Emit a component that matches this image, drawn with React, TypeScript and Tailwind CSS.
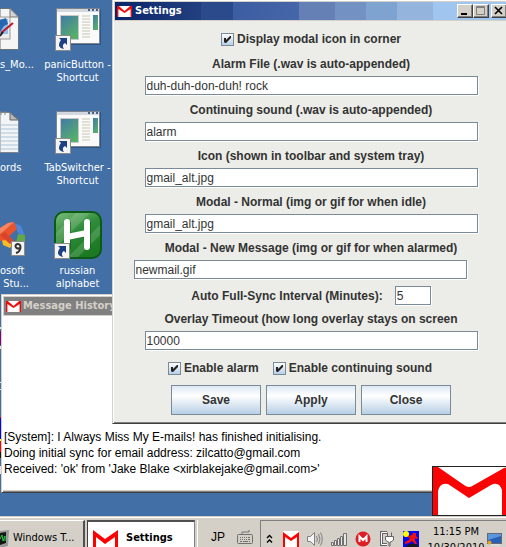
import React from "react";

const tahoma = "font-['DejaVu_Sans_Condensed','DejaVu_Sans',sans-serif]";
const arial = "font-['Liberation_Sans',sans-serif]";

function GmailIcon({ className }: { className: string }) {
  return (
    <svg viewBox="0 0 16 11" preserveAspectRatio="none" className={className} aria-hidden="true">
      <rect width="16" height="11" fill="#fff" />
      <path d="M0 0H2L8 5L14 0H16V11H14.5V3L8 7L1.5 3V11H0Z" fill="#f00a0a" />
    </svg>
  );
}

function ShortcutArrow() {
  return (
    <svg viewBox="0 0 16 16" className="absolute bottom-0 left-0 size-4" aria-hidden="true">
      <rect x=".5" y=".5" width="15" height="15" fill="#f4f4f4" stroke="#8b8b8b" />
      <path d="M4 3H12V10L10 8C8 9 7 11 9 14C3 13 3 9 6 5Z" fill="#1d3f83" />
    </svg>
  );
}

function AppShortcutIcon() {
  return (
    <div className="relative h-[43px] w-[46px]">
      <svg viewBox="0 0 46 43" className="h-[43px] w-[46px]" aria-hidden="true">
        <defs>
          <linearGradient id="pane" x2=".6" y2="1">
            <stop stopColor="#4478a8" />
            <stop offset="1" stopColor="#55b06a" />
          </linearGradient>
        </defs>
        <rect x="2" y="1" width="44" height="36" fill="#2d5586" />
        <rect x="1.5" y=".5" width="43" height="35" fill="#fafafa" stroke="#7c858c" />
        <rect x="2" y="1" width="42" height="3" fill="#d3d8df" />
        <path d="M33 2h2M37 2h2M41 2h2" stroke="#44618f" strokeWidth="2" />
        <rect x="5.500" y="7.500" width="18" height="24" fill="url(#pane)" stroke="#c8c8c8" />
        <path d="M27 8h8M27 11h8M27 14h8M27 17h8M27 20h8M27 23h8M27 26h8M27 29h8" stroke="#d8d8c8" strokeWidth="1.500" />
        <rect x="38" y="7" width="5" height="15" fill="url(#pane)" />
      </svg>
      <ShortcutArrow />
    </div>
  );
}

function AlphabetIcon() {
  return (
    <div className="relative size-12">
      <svg viewBox="0 0 48 48" className="size-12" aria-hidden="true">
        <defs>
          <linearGradient id="leaf" x2=".5" y2="1">
            <stop stopColor="#7cbf7c" />
            <stop offset=".5" stopColor="#2f8c3a" />
            <stop offset="1" stopColor="#1c7a24" />
          </linearGradient>
        </defs>
        <rect x="1" y="1" width="46" height="46" rx="9" fill="url(#leaf)" stroke="#0c5a14" strokeWidth="2" />
        <path d="M2 22L22 2H36L2 36ZM14 46L46 14V24L24 46Z" fill="#fff" opacity=".15" />
        <path d="M14 12V36M34 12V36M14 26L34 23" stroke="#0d4d14" strokeWidth="6" strokeLinecap="round" opacity=".5" />
        <path d="M13 11V36M33 11V36M13 26L33 22" stroke="#fff" strokeWidth="6" strokeLinecap="round" />
      </svg>
      <ShortcutArrow />
    </div>
  );
}

function ImageFileIcon() {
  return (
    <svg viewBox="0 0 20 43" className="h-[43px] w-5" aria-hidden="true">
      <path d="M0 .5H10L18.500 9V41.500H0Z" fill="#f5f5f5" stroke="#68727c" />
      <path d="M10 .5V9H18.500Z" fill="#d5d5d5" stroke="#777" />
      <rect x="-1" y="9" width="11" height="22" fill="#eee" stroke="#999" />
      <rect y="11" width="8" height="15" fill="#8fc1ea" />
      <path d="M0 12L6 10L8 16L4 18L0 24Z" fill="#2666b0" />
      <path d="M1 25L13 15" stroke="#c01828" strokeWidth="2" />
      <path d="M0 28L3 24" stroke="#222" strokeWidth="2" />
    </svg>
  );
}

function NotesIcon() {
  return (
    <svg viewBox="0 0 20 43" className="h-[43px] w-5" aria-hidden="true">
      <path d="M0 1.500H10L18.500 9V41.500H0Z" fill="#f2f4f6" stroke="#7c858c" />
      <path d="M10 1.500V9H18.500Z" fill="#b8b8b8" stroke="#666" />
      <path d="M0 14H18M0 18H18M0 22H18M0 26H18M0 30H18M0 34H18M0 38H18" stroke="#a9c5d8" />
      <path d="M1 0v4M5 0v4" stroke="#888" />
    </svg>
  );
}

function StudioIcon() {
  return (
    <svg viewBox="0 0 26 43" className="h-[43px] w-[26px]" aria-hidden="true">
      <path d="M14 9L21 12L25 22L18 19Z" fill="#4c86d8" />
      <path d="M18 20L25 21V31L16 29Z" fill="#62a845" />
      <path d="M2 26L8 23L14 28L10 34L3 31Z" fill="#f8bd24" />
      <path d="M0 14L8 9L14 8L17 15L5 26L0 27Z" fill="#e8532c" />
      <path d="M0 14L8 9L14 8L5 16L0 20Z" fill="#f58563" />
      <path d="M5 18L14 27L10 30L0 21Z" fill="#d9442a" />
      <rect x="11.500" y="27.500" width="13" height="14" fill="#f4f4f4" stroke="#8b8b8b" />
      <path d="M20 34C15 36 14 30 18 30S21 38 16 39" fill="none" stroke="#333" strokeWidth="2" />
    </svg>
  );
}

function DesktopIcon({ icon, lines, edge }: { icon: React.ReactNode; lines: string[]; edge?: boolean }) {
  return (
    <div className={`flex h-[103px] flex-col ${edge ? "items-start" : "items-center"}`}>
      <div className="flex h-12 items-center">{icon}</div>
      <div className={`whitespace-pre pt-[5px] text-[11px] leading-[13px] text-white ${edge ? "text-left" : "text-center"}`}>
        {lines.map((l) => (
          <div key={l}>{l}</div>
        ))}
      </div>
    </div>
  );
}

function Check({ id, label }: { id: string; label: string }) {
  return (
    <div className="flex items-center gap-[3px]">
      <div className="relative size-[13px]">
        <input
          id={id}
          type="checkbox"
          defaultChecked
          className="peer block size-[13px] appearance-none border border-[#7a8a99] bg-linear-to-b from-white to-[#b8cfe5]"
        />
        <svg viewBox="0 0 13 13" className="pointer-events-none absolute inset-0 hidden size-[13px] peer-checked:block" aria-hidden="true">
          <path d="M3 5H5V7L9 3H10V5L5 10H4L3 9Z" fill="#222" />
        </svg>
      </div>
      <label htmlFor={id} className="leading-4">{label}</label>
    </div>
  );
}

const inputStyle =
  "block h-[19px] rounded-none border border-[#7a8a99] bg-white px-px pt-px text-[12px] leading-4 font-normal text-[#333] shadow-[1px_1px_0_#fff] outline-none";

function Field({ id, label, value, shifted }: { id: string; label: string; value: string; shifted?: boolean }) {
  return (
    <div className="flex h-[46px] flex-col items-center">
      <label htmlFor={id} className="mb-1 leading-4">{label}</label>
      <div className={shifted ? "pr-[22px]" : ""}>
        <input id={id} defaultValue={value} className={`${inputStyle} w-[333px]`} />
      </div>
    </div>
  );
}

const captionButton =
  "flex h-[14px] w-4 items-center justify-center border border-t-white border-l-white border-r-[#404040] border-b-[#404040] bg-[#d4d0c8] shadow-[inset_-1px_-1px_0_#808080]";

function SettingsWindow() {
  return (
    <section className="absolute -top-px left-[112px] flex h-[425px] w-[398px] flex-col border border-t-[#d4d0c8] border-l-[#d4d0c8] border-r-[#404040] border-b-[#404040] bg-[#d4d0c8] p-px shadow-[inset_1px_1px_0_#fff,inset_-1px_-1px_0_#808080]">
      <header className="m-px flex h-[18px] shrink-0 items-center gap-[3px] bg-[linear-gradient(to_right,#0a246a_0%,#22407f_22%,#2a4a8b_22%,#2a4a8b_30%,#3d5da2_30%,#4566a8_47%,#6580b5_47%,#6580b5_56%,#7391c2_56%,#7391c2_64%,#7fa3d1_64%,#7fa3d1_72%,#94b4de_72%,#94b4de_81%,#a0c6f0_81%)] pl-0.5">
        <GmailIcon className="h-[11px] w-[15px]" />
        <h1 className={`${tahoma} flex-1 text-[11px] font-bold text-white`}>Settings</h1>
        <div className="flex">
          <button aria-label="Minimize" className={captionButton}>
            <svg viewBox="0 0 14 12" className="h-3 w-[14px]"><rect x="3" y="8" width="6" height="2" /></svg>
          </button>
          <button aria-label="Maximize" className={captionButton}>
            <svg viewBox="0 0 14 12" className="h-3 w-[14px]"><path d="M2.500 1.500H10.500V9.500H2.500ZM2 2.500H11" fill="none" stroke="#808080" /></svg>
          </button>
          <button aria-label="Close" className={`${captionButton} ml-0.5`}>
            <svg viewBox="0 0 14 12" className="h-3 w-[14px]"><path d="M3 2L10 9M10 2L3 9" stroke="#000" strokeWidth="1.600" /></svg>
          </button>
        </div>
      </header>
      <form className={`${arial} flex flex-1 flex-col bg-[#ecede8] text-[12px] font-bold text-[#333]`} onSubmit={(e) => e.preventDefault()}>
        <div className="flex h-[35px] shrink-0 justify-center pt-[10px]"><div><Check id="modal" label="Display modal icon in corner" /></div></div>
        <Field id="alarm-file" label="Alarm File (.wav is auto-appended)" value="duh-duh-don-duh! rock" />
        <Field id="continuing" label="Continuing sound (.wav is auto-appended)" value="alarm" />
        <Field id="icon" label="Icon (shown in toolbar and system tray)" value="gmail_alt.jpg" />
        <Field id="modal-normal" label="Modal - Normal (img or gif for when idle)" value="gmail_alt.jpg" />
        <Field id="modal-new" label="Modal - New Message (img or gif for when alarmed)" value="newmail.gif" shifted />
        <div className="flex h-[25px] items-start justify-center gap-3">
          <label htmlFor="interval" className="leading-5">Auto Full-Sync Interval (Minutes):</label>
          <input id="interval" defaultValue="5" className={`${inputStyle} w-9`} />
        </div>
        <Field id="timeout" label="Overlay Timeout (how long overlay stays on screen" value="10000" />
        <div className="flex h-7 items-start justify-center gap-[14px] pt-[3px] pr-[22px]">
          <Check id="enable-alarm" label="Enable alarm" />
          <Check id="enable-sound" label="Enable continuing sound" />
        </div>
        <div className="flex justify-center gap-[5px]">
          {["Save", "Apply", "Close"].map((t) => (
            <button key={t} type="button" className="h-[30px] w-[90px] border border-[#7a8a99] bg-linear-to-b from-[#dde8f3] via-white via-35% to-[#b8cfe5] font-bold">
              {t}
            </button>
          ))}
        </div>
      </form>
    </section>
  );
}

function HistoryWindow() {
  return (
    <section className="absolute top-[294px] left-px flex h-[199px] w-[560px] flex-col border border-t-[#d4d0c8] border-l-[#d4d0c8] border-b-[#404040] bg-[#d4d0c8] p-px shadow-[inset_1px_1px_0_#fff,inset_-1px_-1px_0_#808080]">
      <header className="m-px flex h-[18px] shrink-0 items-center gap-0.5 bg-[#808080] pl-0.5">
        <GmailIcon className="h-[11px] w-[15px]" />
        <h2 className={`${tahoma} text-[11px] font-bold text-[#d4d0c8]`}>Message History</h2>
      </header>
      <div className={`${arial} mb-px flex-1 bg-white pt-[113px] pl-px text-[12px] leading-4 text-black`}>
        <p>[System]: I Always Miss My E-mails! has finished initialising.</p>
        <p>Doing initial sync for email address: zilcatto@gmail.com</p>
        <p>Received: 'ok' from 'Jake Blake &lt;xirblakejake@gmail.com&gt;'</p>
      </div>
    </section>
  );
}

function Overlay() {
  return (
    <svg viewBox="0 0 76 50" className="absolute top-[466px] left-[432px] h-[50px] w-[76px]" role="img" aria-label="New mail">
      <rect x=".5" y=".5" width="77" height="49" fill="#fff" stroke="#222" />
      <path d="M1 1H6L32 19Q37 23 42 19L72 2L76 1V49H70V24Q67 15 59 19L37 32L16 18Q8 16 6 25V49H1Z" fill="#f80404" />
    </svg>
  );
}

function EdgeStrip() {
  return (
    <svg viewBox="0 0 2 200" className="absolute top-[294px] left-0 h-[200px] w-0.5" aria-hidden="true">
      <path d="M0 33h2v2H0zM0 52h2v3H0zM0 88h2v1H0zM0 95h2v1H0zM0 172h2v8H0z" fill="#e4e4e4" />
      <path d="M0 37h2v14H0z" fill="#800080" />
      <path d="M0 123h2v1H0zM0 147h2v11H0z" fill="#f00" />
      <path d="M0 124h2v21H0z" fill="#00f" />
      <path d="M0 145h2v2H0z" fill="#ff0" />
      <path d="M0 158h2v6H0z" fill="#111" />
    </svg>
  );
}

function Taskbar() {
  return (
    <footer className={`${tahoma} flex h-[31px] shrink-0 items-start overflow-hidden border-t border-[#d4d0c8] bg-[#d4d0c8] text-[11px] text-black shadow-[inset_0_1px_0_#fff]`}>
      <button className="mt-[3px] flex h-9 w-[85px] shrink-0 items-center gap-1 border-t border-r-2 border-t-white border-r-[#505050] whitespace-nowrap">
        <svg viewBox="0 0 9 18" className="h-[18px] w-[9px]" aria-hidden="true">
          <path d="M0 1L9 0L8 16L0 18Z" fill="#999" />
          <path d="M0 3L6 2V13L0 15Z" fill="#101810" />
          <path d="M0 9L2 5L3 11L5 6V11" fill="none" stroke="#24c848" />
        </svg>
        Windows T...
      </button>
      <button className="mt-[3px] ml-0.5 flex h-9 w-[108px] shrink-0 items-center gap-2 border border-t-2 border-t-[#505050] border-l-[#404040] border-r-[#808080] bg-white pl-[5px] font-bold">
        <svg viewBox="0 0 25 25" className="mt-2 size-[25px]" aria-hidden="true">
          <path d="M0 0L12 9L25 0V25H22V7L12 14L3 7V25H0Z" fill="#f00" />
        </svg>
        Settings
      </button>
      <div className="mt-[3px] ml-0.5 h-9 w-px bg-white" />
      <span className={`${arial} mt-3 ml-[13px] w-[26px] text-[12px] leading-4`}>JP</span>
      <svg viewBox="0 0 16 16" className="mt-3 size-4 shrink-0" fill="none" stroke="#707070" aria-hidden="true">
        <rect x=".5" y="5.500" width="15" height="9" rx="1" />
        <path d="M3 8.500h1M5 8.500h1M7 8.500h1M9 8.500h1M11 8.500h2M3 10.500h1M5 10.500h1M7 10.500h1M9 10.500h1M11 10.500h2M3 12.500h2M6 12.500h5M12 12.500h1M5 5V3H12V1" />
      </svg>
      <div className="mt-[3px] ml-[7px] flex h-9 flex-1 items-start overflow-hidden border-t border-l border-[#808080] pt-[10px] pl-[5px]">
        <svg viewBox="0 0 7 10" className="mt-[3px] h-[10px] w-[7px] shrink-0" fill="none" stroke="#000" strokeWidth="1.400" aria-hidden="true">
          <path d="M1 4L3.500 1.500L6 4M1 8.500L3.500 6L6 8.500" />
        </svg>
        <svg viewBox="0 0 16 16" className="ml-[10px] size-4 shrink-0" aria-hidden="true">
          <rect width="16" height="16" fill="#fff" />
          <path d="M0 1L8 7L16 1V16H14V6L8 10L2 6V16H0Z" fill="#f00" />
        </svg>
        <svg viewBox="0 0 16 16" className="ml-2 size-4 shrink-0" fill="none" stroke="#808080" aria-hidden="true">
          <path d="M.5 5.500H3.500L7.500 1.500V14.500L3.500 10.500H.5Z" fill="#f4f4f4" />
          <path d="M9.500 5Q11.500 8 9.500 11M11.500 3Q14.500 8 11.500 13M13.500 1.500Q17 8 13.500 14.500" />
        </svg>
        <svg viewBox="0 0 16 16" className="ml-2 size-4 shrink-0" fill="#e8e8e8" stroke="#707070" aria-hidden="true">
          <path d="M.5 11.500h2v3h-2zM3.500 9.500h2v5h-2zM6.500 7.500h2v7h-2zM9.500 5.500h2v9h-2zM12.500 2.500h3v12h-3z" />
        </svg>
        <svg viewBox="0 0 16 16" className="ml-2 size-4 shrink-0" aria-hidden="true">
          <circle cx="8" cy="8" r="7.500" fill="#e01c24" />
          <path d="M4.500 11V5.500L8 9L11.500 5.500V11" fill="none" stroke="#fff" strokeWidth="2" />
        </svg>
        <svg viewBox="0 0 16 16" className="ml-2 size-4 shrink-0" aria-hidden="true">
          <path d="M8 1.500H2.500V13.500H8" fill="none" stroke="#666" strokeWidth="3" />
          <path d="M8 1.500H2.500V13.500H8" fill="none" stroke="#fff" />
          <path d="M6.500 5.500H14.500V9L12 11H11V15H10V11H9L6.500 9ZM8.500 1.500V5M12.500 1.500V5" fill="#fff" stroke="#666" />
        </svg>
        <svg viewBox="0 0 16 16" className="ml-2 size-4 shrink-0" aria-hidden="true">
          <rect width="16" height="16" fill="#0808e8" />
          <circle cx="3" cy="3" r="3" fill="#ff0" />
          <path d="M10 2h3v3l2 2-1 1-2-1v2l2 4h-2l-3-3-3 2-4 1v-2l4-2 1-3-2 1V5l4-1Z" fill="#f01010" />
          <path d="M3 15Q8 11 15 14V16H3Z" fill="#181818" />
        </svg>
        <div className="-mt-[7px] ml-[10px] flex w-[54px] flex-col items-center leading-4 whitespace-nowrap">
          <span>11:15 PM</span>
          <span>10/30/2010</span>
        </div>
        <svg viewBox="0 0 16 14" className="mt-0.5 ml-1 h-[14px] w-4 shrink-0" aria-hidden="true">
          <rect x=".5" y=".5" width="14" height="10" fill="#2860b8" stroke="#667" />
          <path d="M1 7L14 3V1H1Z" fill="#5c96dc" />
          <path d="M4 12H13" stroke="#ddd" strokeWidth="2" />
          <circle cx="2.500" cy="9.500" r="2" fill="#e8a020" />
        </svg>
      </div>
    </footer>
  );
}

export default function App() {
  return (
    <div className="flex h-screen flex-col overflow-hidden bg-[#426fa6]">
      <main className="relative min-h-0 flex-1 overflow-hidden">
        <div className={`${tahoma} flex pt-[5px]`}>
          <div className="w-10">
            <DesktopIcon edge icon={<ImageFileIcon />} lines={["s_Mo..."]} />
            <DesktopIcon edge icon={<NotesIcon />} lines={["ords"]} />
            <DesktopIcon edge icon={<StudioIcon />} lines={["osoft", " Stu..."]} />
          </div>
          <div className="w-[75px]">
            <DesktopIcon icon={<AppShortcutIcon />} lines={["panicButton -", "Shortcut"]} />
            <DesktopIcon icon={<AppShortcutIcon />} lines={["TabSwitcher -", "Shortcut"]} />
            <DesktopIcon icon={<AlphabetIcon />} lines={["russian", "alphabet"]} />
          </div>
        </div>
        <EdgeStrip />
        <HistoryWindow />
        <SettingsWindow />
        <Overlay />
      </main>
      <Taskbar />
    </div>
  );
}
